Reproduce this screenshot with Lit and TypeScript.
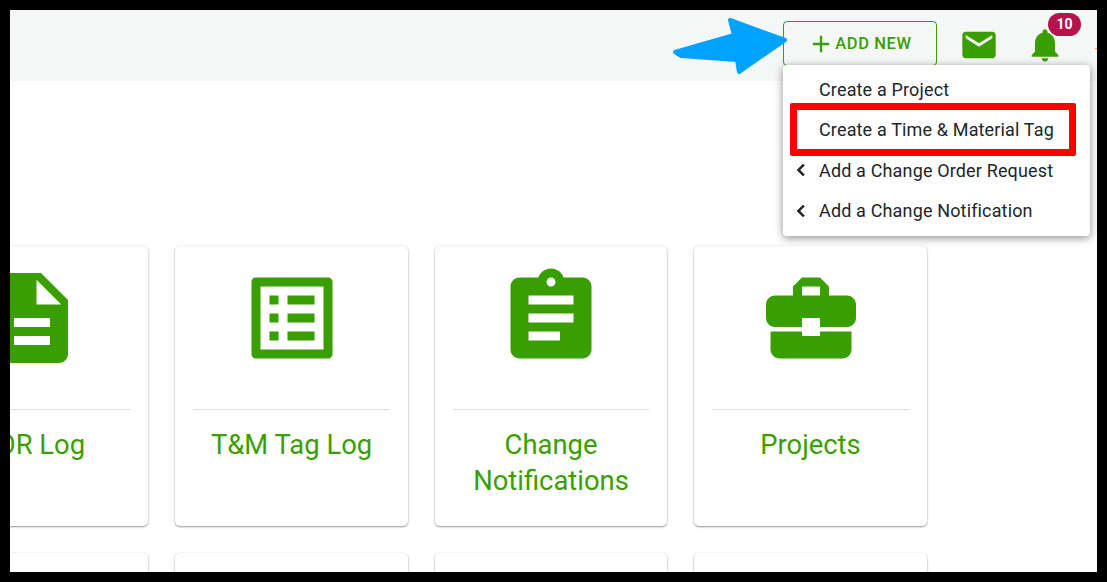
import { LitElement, html, css, svg } from "lit";
import { customElement } from "lit/decorators.js";

const ICONS: Record<string, string> = {
  description: "M14 2H6c-1.1 0-1.99.9-1.99 2L4 20c0 1.1.89 2 1.99 2H18c1.1 0 2-.9 2-2V8l-6-6zm2 16H8v-2h8v2zm0-4H8v-2h8v2zm-3-5V3.5L18.5 9H13z",
  list: "M19 5v14H5V5h14m1.1-2H3.9c-.5 0-.9.4-.9.9v16.2c0 .4.4.9.9.9h16.2c.4 0 .9-.5.9-.9V3.9c0-.5-.5-.9-.9-.9zM11 7h6v2h-6V7zm0 4h6v2h-6v-2zm0 4h6v2h-6zM7 7h2v2H7zm0 4h2v2H7zm0 4h2v2H7z",
  assignment: "M19 3h-4.18C14.4 1.84 13.3 1 12 1c-1.3 0-2.4.84-2.82 2H5c-1.1 0-2 .9-2 2v14c0 1.1.9 2 2 2h14c1.1 0 2-.9 2-2V5c0-1.1-.9-2-2-2zm-7 0c.55 0 1 .45 1 1s-.45 1-1 1-1-.45-1-1 .45-1 1-1zm2 14H7v-2h7v2zm3-4H7v-2h10v2zm0-4H7V7h10v2z",
  business: "M10 16v-1H3.01L3 19c0 1.11.89 2 2 2h14c1.11 0 2-.89 2-2v-4h-7v1h-4zm10-9h-4.01V5l-2-2h-4l-2 2v2H4c-1.1 0-2 .9-2 2v3c0 1.11.89 2 2 2h6v-2h4v2h6c1.1 0 2-.9 2-2V9c0-1.1-.9-2-2-2zm-6 0h-4V5h4v2z",
  email: "M20 4H4c-1.1 0-1.99.9-1.99 2L2 18c0 1.1.9 2 2 2h16c1.1 0 2-.9 2-2V6c0-1.1-.9-2-2-2zm0 4l-8 5-8-5V6l8 5 8-5v2z",
  bell: "M12 22c1.1 0 2-.9 2-2h-4c0 1.1.89 2 2 2zm6-6v-5c0-3.07-1.64-5.64-4.5-6.32V4c0-.83-.67-1.5-1.5-1.5s-1.5.67-1.5 1.5v.68C7.63 5.36 6 7.92 6 11v5l-2 2v1h16v-1l-2-2z",
  plus: "M19 13h-6v6h-2v-6H5v-2h6V5h2v6h6v2z",
  chevron: "M15.41 7.41L14 6l-6 6 6 6 1.41-1.41L10.83 12z",
};

const icon = (name: string, cls: string) =>
  html`<svg class=${cls} viewBox="0 0 24 24" fill="currentColor" aria-hidden="true">${svg`<path d=${ICONS[name]}></path>`}</svg>`;

const CARDS = [
  { icon: "description", label: "COR Log" },
  { icon: "list", label: "T&M Tag Log" },
  { icon: "assignment", label: "Change Notifications" },
  { icon: "business", label: "Projects" },
];

const MENU = [
  { label: "Create a Project", sub: false },
  { label: "Create a Time & Material Tag", sub: false },
  { label: "Add a Change Order Request", sub: true },
  { label: "Add a Change Notification", sub: true },
];

@customElement("app-root")
export class AppRoot extends LitElement {
  static styles = css`
    :host {
      display: block;
      box-sizing: border-box;
      width: 1107px;
      height: 582px;
      padding: 10px;
      background: #000;
      font-family: Roboto, "Liberation Sans", sans-serif;
    }
    .frame {
      position: relative;
      height: 562px;
      background: #fff;
      overflow: hidden;
    }
    .topbar {
      display: flex;
      justify-content: flex-end;
      align-items: center;
      box-sizing: border-box;
      height: 71px;
      padding: 0 32px 4px 0;
      background: #f5f7f6;
      color: #399f00;
    }
    .add {
      display: flex;
      align-items: center;
      justify-content: center;
      box-sizing: border-box;
      width: 154px;
      height: 45px;
      margin: 0 21.5px 0 0;
      padding: 0 1px 0 0;
      border: 1px solid #399f00;
      border-radius: 4px;
      background: transparent;
      color: inherit;
      font: 500 16.5px Roboto, sans-serif;
      letter-spacing: 0.6px;
    }
    .plus { width: 28px; height: 28px; }
    .mail, .bell { width: 40px; height: 40px; display: block; }
    .mail { margin: 2px 26.5px 0 0; }
    .bellwrap { position: relative; height: 40px; margin-top: 2px; }
    .badge {
      position: absolute;
      left: 23px;
      top: -12px;
      width: 33px;
      height: 23px;
      border-radius: 12px;
      background: #b5134a;
      color: #fff;
      font-size: 14px;
      font-weight: 700;
      line-height: 23px;
      text-align: center;
    }
    .speck {
      position: absolute;
      right: 0;
      top: 38px;
      width: 2px;
      height: 1px;
      background: #f0a040;
    }
    .menu {
      position: absolute;
      left: 773px;
      top: 55px;
      box-sizing: border-box;
      width: 307px;
      height: 171px;
      padding: 4px 0;
      background: #fff;
      border-radius: 4px;
      box-shadow: 0 2px 8px rgba(0, 0, 0, 0.45);
      color: #212529;
      font-size: 18px;
      letter-spacing: 0.15px;
    }
    .item {
      display: flex;
      align-items: center;
      height: 40.5px;
      padding-left: 36px;
      position: relative;
    }
    .chev {
      position: absolute;
      left: 5.5px;
      width: 24px;
      height: 24px;
      stroke: currentColor;
      stroke-width: 0.6;
    }
    .redbox {
      position: absolute;
      left: 7px;
      top: 38px;
      box-sizing: border-box;
      width: 286px;
      height: 53px;
      border: 7px solid #f00;
      border-radius: 2px;
    }
    .arrow {
      position: absolute;
      left: 650px;
      top: 0;
      width: 140px;
      height: 70px;
    }
    .grid {
      display: grid;
      grid-template-columns: repeat(4, 232.6px);
      gap: 27px 26.9px;
      margin: 165px 0 0 -94.25px;
    }
    .card {
      box-sizing: border-box;
      height: 280px;
      padding: 17.5px 18px 0;
      background: #fff;
      border-radius: 5px;
      box-shadow: 0 1px 2px rgba(0, 0, 0, 0.4), 0 0 3px rgba(0, 0, 0, 0.08);
      color: #399f00;
      text-align: center;
    }
    .glyph {
      display: block;
      width: 108px;
      height: 108px;
      margin: 0 auto;
    }
    hr {
      height: 1px;
      margin: 37.5px 0 17px;
      border: 0;
      background: #dddddd;
    }
    .title {
      font-size: 27.4px;
      line-height: 36px;
    }
  `;

  render() {
    return html`
      <div class="frame">
        <header class="topbar">
          <button class="add">${icon("plus", "plus")}ADD NEW</button>
          ${icon("email", "mail")}
          <div class="bellwrap">
            ${icon("bell", "bell")}
            <span class="badge">10</span>
          </div>
        </header>
        <span class="speck"></span>
        <main class="grid">
          ${CARDS.map(
            (c) => html`<article class="card">
              ${icon(c.icon, "glyph")}
              <hr />
              <div class="title">${c.label}</div>
            </article>`
          )}
          ${CARDS.map(() => html`<article class="card"></article>`)}
        </main>
        <nav class="menu">
          ${MENU.map(
            (m) => html`<div class="item">
              ${m.sub ? icon("chevron", "chev") : ""}${m.label}
            </div>`
          )}
          <div class="redbox"></div>
        </nav>
        <svg class="arrow" viewBox="660 10 140 70" aria-hidden="true">
          <polygon
            points="730,20 734,35 675,52 681,56 737,60 739,72 785,40"
            fill="#00a2ff"
            stroke="#00a2ff"
            stroke-width="4"
            stroke-linejoin="round"
          ></polygon>
        </svg>
      </div>
    `;
  }
}
